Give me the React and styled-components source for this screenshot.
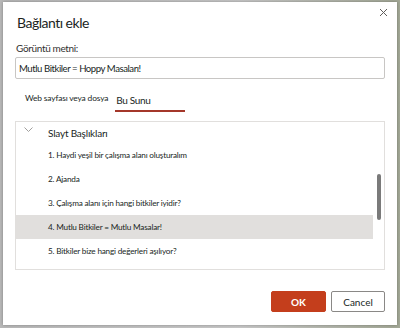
import React from "react";
import styled, { createGlobalStyle } from "styled-components";

const GlobalStyle = createGlobalStyle`
  html, body {
    margin: 0;
    padding: 0;
    background: #c2c2c2;
  }
  body {
    font-family: Lato, "Open Sans", "Liberation Sans", sans-serif;
    color: #201f1e;
  }
`;

const Backdrop = styled.div`
  width: 400px;
  height: 328px;
  box-sizing: border-box;
  padding: 2px 3px 3px 3px;
  background: linear-gradient(90deg, #b8b8b8 0%, #c8c8c8 60%, #a3a896 100%);
`;

const Dialog = styled.div`
  height: 100%;
  box-sizing: border-box;
  background: #ffffff;
  box-shadow: 0 0 3px rgba(0, 0, 0, 0.3);
  padding: 0 12px;
  display: flex;
  flex-direction: column;
`;

const Header = styled.div`
  display: flex;
  justify-content: space-between;
  align-items: flex-start;
  height: 30px;
`;

const Title = styled.h1`
  margin: 11px 0 0 2px;
  font-size: 14px;
  letter-spacing: -0.5px;
  font-weight: 400;
  line-height: 20px;
  color: #201f1e;
`;

const CloseButton = styled.button`
  margin: 2px -6px 0 0;
  width: 16px;
  height: 16px;
  padding: 0;
  border: 0;
  background: none;
  display: flex;
  align-items: center;
  justify-content: center;
`;

const FieldLabel = styled.label`
  margin: 10px 0 0 1px;
  font-size: 10px;
  letter-spacing: -0.35px;
  line-height: 13px;
  color: #323130;
`;

const TextInput = styled.input`
  margin-top: 2px;
  height: 22px;
  box-sizing: border-box;
  border: 1px solid #c8c6c4;
  border-radius: 2px;
  padding: 0 3px;
  font-family: inherit;
  font-size: 9.6px;
  letter-spacing: -0.45px;
  color: #201f1e;
  outline: none;
`;

const Tabs = styled.div`
  display: flex;
  align-items: flex-end;
  margin: 14px 0 0 10px;
  height: 19px;
`;

const Tab = styled.div`
  box-sizing: border-box;
  font-size: ${(p) => (p.$small ? "8.4px" : "10px")};
  letter-spacing: ${(p) => (p.$small ? "-0.15px" : "-0.35px")};
  line-height: 14px;
  color: #201f1e;
  min-width: ${(p) => (p.$active ? "70px" : "0")};
  padding: ${(p) => (p.$active ? "0 0 3px 1px" : "0 7px 5px 0")};
  border-bottom: 2px solid ${(p) => (p.$active ? "#a4372a" : "transparent")};
`;

const ListBox = styled.div`
  margin-top: 9px;
  height: 149px;
  box-sizing: border-box;
  border: 1px solid #e1dfdd;
  display: flex;
`;

const ListScroll = styled.div`
  flex: 1;
  display: flex;
  flex-direction: column;
`;

const GroupRow = styled.div`
  height: 21px;
  display: flex;
  align-items: center;
  padding-left: 8px;
  font-size: 10px;
  letter-spacing: -0.2px;
  color: #201f1e;
`;

const Chevron = styled.span`
  width: 24px;
  display: flex;
  align-items: center;
  margin-top: -7px;
`;

const ItemRow = styled.div`
  height: 24px;
  display: flex;
  align-items: center;
  padding-left: 32px;
  font-size: 8.2px;
  letter-spacing: -0.2px;
  color: #201f1e;
  background: ${(p) => (p.$selected ? "#e1dfdd" : "transparent")};
`;

const ScrollTrack = styled.div`
  width: 11px;
  display: flex;
  justify-content: center;
  padding-top: 52px;
`;

const ScrollThumb = styled.div`
  width: 4px;
  height: 46px;
  border-radius: 2px;
  background: #7a7a7a;
`;

const Footer = styled.div`
  display: flex;
  justify-content: flex-end;
  gap: 5px;
  margin-top: 21px;
`;

const Button = styled.button`
  width: ${(p) => (p.$primary ? "55px" : "54px")};
  height: 21px;
  box-sizing: border-box;
  border-radius: 2px;
  font-family: inherit;
  font-size: 10px;
  font-weight: ${(p) => (p.$primary ? 700 : 400)};
  padding: 0;
  border: 1px solid ${(p) => (p.$primary ? "#c43e1c" : "#8a8886")};
  background: ${(p) => (p.$primary ? "#c43e1c" : "#ffffff")};
  color: ${(p) => (p.$primary ? "#ffffff" : "#201f1e")};
`;

const slides = [
  "Haydi yeşil bir çalışma alanı oluşturalım",
  "Ajanda",
  "Çalışma alanı için hangi bitkiler iyidir?",
  "Mutlu Bitkiler = Mutlu Masalar!",
  "Bitkiler bize hangi değerleri aşılıyor?",
];

export default function App() {
  return (
    <>
      <GlobalStyle />
      <Backdrop>
        <Dialog>
          <Header>
            <Title>Bağlantı ekle</Title>
            <CloseButton aria-label="Kapat">
              <svg width="9" height="9" viewBox="0 0 9 9">
                <path d="M1 1L8 8M8 1L1 8" stroke="#605e5c" strokeWidth="1" fill="none" />
              </svg>
            </CloseButton>
          </Header>
          <FieldLabel>Görüntü metni:</FieldLabel>
          <TextInput defaultValue="Mutlu Bitkiler = Hoppy Masaları!" />
          <Tabs>
            <Tab $small>Web sayfası veya dosya</Tab>
            <Tab $active>Bu Sunu</Tab>
          </Tabs>
          <ListBox>
            <ListScroll>
              <GroupRow>
                <Chevron>
                  <svg width="9" height="5" viewBox="0 0 9 5">
                    <path d="M0.5 0.5L4.5 4.5L8.5 0.5" stroke="#a19f9d" strokeWidth="1" fill="none" />
                  </svg>
                </Chevron>
                Slayt Başlıkları
              </GroupRow>
              {slides.map((s, i) => (
                <ItemRow key={i} $selected={i === 3}>
                  {i + 1}. {s}
                </ItemRow>
              ))}
            </ListScroll>
            <ScrollTrack>
              <ScrollThumb />
            </ScrollTrack>
          </ListBox>
          <Footer>
            <Button $primary>OK</Button>
            <Button>Cancel</Button>
          </Footer>
        </Dialog>
      </Backdrop>
    </>
  );
}
